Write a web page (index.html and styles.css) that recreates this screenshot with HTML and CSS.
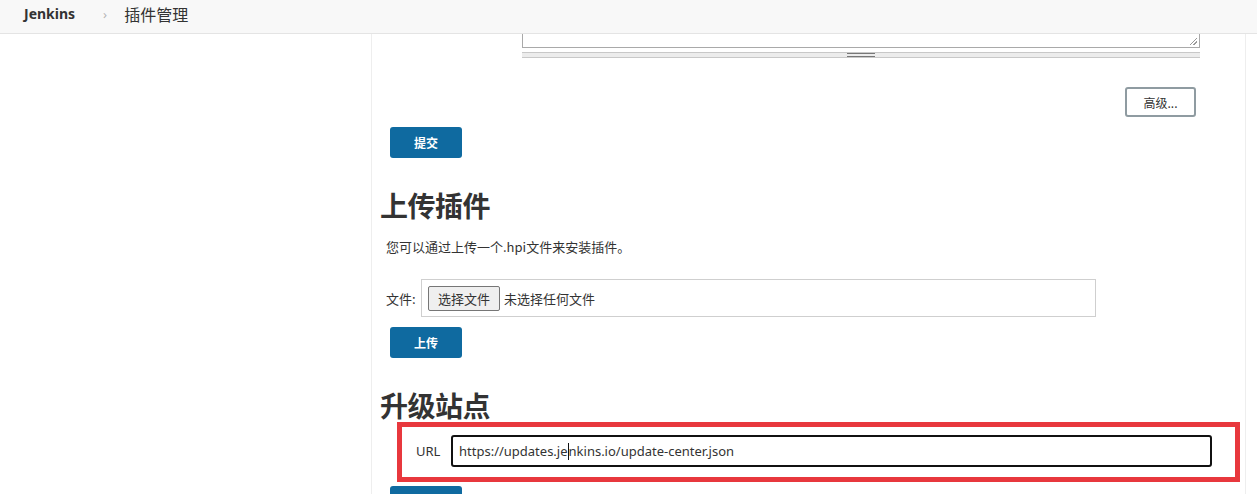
FILE: index.html
```html
<!DOCTYPE html>
<html lang="zh-CN">
<head>
<meta charset="utf-8">
<title>插件管理 - Jenkins</title>
<link rel="stylesheet" href="styles.css">
</head>
<body>
<header class="topbar">
  <a class="crumb crumb-root" href="#">Jenkins</a>
  <span class="crumb-sep">›</span>
  <span class="crumb crumb-page">插件管理</span>
</header>
<div class="layout">
  <aside class="side"></aside>
  <main class="panel">
    <div class="textarea-wrap">
      <div class="textarea-stub"><span class="grip"></span></div>
      <div class="resize-bar"><span class="handle"></span></div>
    </div>
    <div class="adv-row">
      <button class="btn-adv" type="button">高级...</button>
    </div>
    <button class="btn-primary" type="button">提交</button>

    <h1 class="section-title">上传插件</h1>
    <p class="hint">您可以通过上传一个.hpi文件来安装插件。</p>
    <div class="file-row">
      <span class="file-label">文件:</span>
      <div class="file-box">
        <span class="file-btn">选择文件</span>
        <span class="file-none">未选择任何文件</span>
      </div>
    </div>
    <button class="btn-primary" type="button">上传</button>

    <h1 class="section-title title-2">升级站点</h1>
    <div class="highlight">
      <span class="url-label">URL</span>
      <div class="url-input"><span>https://updates.je</span><span class="caret"></span><span>nkins.io/update-center.json</span></div>
    </div>
    <button class="btn-primary btn-last" type="button">提交</button>
  </main>
</div>
</body>
</html>
```
FILE: styles.css
```css
* { box-sizing: border-box; }
html, body { margin: 0; padding: 0; }
body {
  font-family: "Noto Sans", "Noto Sans CJK SC", sans-serif;
  color: #333;
  background: #fff;
  width: 1257px;
  height: 494px;
  overflow: hidden;
}
.topbar {
  height: 34px;
  background: #f8f8f8;
  border-bottom: 1px solid #e4e4e4;
  display: flex;
  align-items: center;
  padding-left: 24px;
}
.crumb { color: #333; text-decoration: none; }
.crumb-root { font-size: 14px; font-weight: 700; padding-bottom: 6px; }
.crumb-sep { color: #b5b5b5; font-size: 13px; margin-left: 28px; margin-right: 17px; padding-bottom: 6px; }
.crumb-page { font-size: 16px; font-family: "Noto Sans CJK SC", sans-serif; padding-bottom: 6px; }

.layout { display: flex; height: 460px; }
.side { width: 371px; flex: none; }
.panel {
  width: 875px;
  border-left: 1px solid #eee;
  border-right: 1px solid #eee;
  display: flex;
  flex-direction: column;
  align-items: flex-start;
  font-family: "Noto Sans", "Noto Sans CJK SC", sans-serif;
}
.panel > * { flex-shrink: 0; }
.textarea-wrap { margin-left: 150px; width: 678px; }
.textarea-stub {
  height: 14px;
  border: 1px solid #a9a9a9;
  border-top: none;
  position: relative;
}
.grip {
  position: absolute; right: 2px; bottom: 2px;
  width: 7px; height: 7px;
  background: linear-gradient(135deg, transparent 45%, #999 45%, #999 55%, transparent 55%, transparent 70%, #999 70%, #999 80%, transparent 80%);
}
.resize-bar {
  margin-top: 4px;
  height: 6px;
  background: #ececec;
  border-top: 1px solid #c8c8c8;
  border-bottom: 1px solid #c8c8c8;
  display: flex;
  justify-content: center;
  align-items: center;
}
.handle {
  width: 28px; height: 4px;
  border-top: 1px solid #777;
  border-bottom: 1px solid #777;
}
.adv-row { width: 100%; display: flex; justify-content: flex-end; padding-right: 49px; margin-top: 29px; }
.btn-adv {
  width: 71px; height: 30px;
  background: #fff;
  border: 2px solid #8f9ba1;
  border-radius: 3px;
  font: 12px "Noto Sans CJK SC", sans-serif;
  color: #333;
  padding: 0;
}
.btn-primary {
  margin-left: 18px;
  margin-top: 10px;
  width: 72px; height: 31px;
  background: #0f6aa0;
  color: #fff;
  border: none;
  border-radius: 3px;
  font: 700 12px "Noto Sans CJK SC", sans-serif;
  padding: 0;
}
.section-title {
  margin: 32px 0 0 8px;
  font: 700 28px/30px "Noto Sans CJK SC", sans-serif;
  color: #333;
  letter-spacing: -0.5px;
}
.hint { margin: 18px 0 0 14px; font-size: 13px; line-height: 18px; font-family: "Noto Sans CJK SC", sans-serif; }
.file-row { margin-top: 23px; margin-left: 14px; display: flex; align-items: center; font-family: "Noto Sans CJK SC", sans-serif; font-size: 13px; }
.file-label { width: 35px; }
.file-box {
  width: 675px; height: 38px;
  border: 1px solid #cfcfcf;
  display: flex; align-items: center;
  padding-left: 6px;
}
.file-btn {
  width: 72px; height: 25px;
  background: #efefef;
  border: 1px solid #767676;
  border-radius: 2px;
  display: flex; align-items: center; justify-content: center;
  margin-right: 4px;
}
.title-2 { margin-top: 32px; }
.highlight {
  margin-top: 2px;
  margin-left: 25px;
  width: 843px;
  height: 60px;
  border: 5px solid #e8383d;
  display: flex;
  align-items: center;
  padding: 0 23px 2px 14px;
}
.url-label { width: 35px; font-size: 13px; color: #333; }
.url-input {
  flex: 1;
  height: 32px;
  border: 2px solid #111;
  border-radius: 3px;
  display: flex; align-items: center;
  padding-left: 6px;
  font-size: 13px;
  color: #333;
}
.caret { width: 1px; height: 17px; background: #111; }
.btn-last { margin-top: 4px; }
```
